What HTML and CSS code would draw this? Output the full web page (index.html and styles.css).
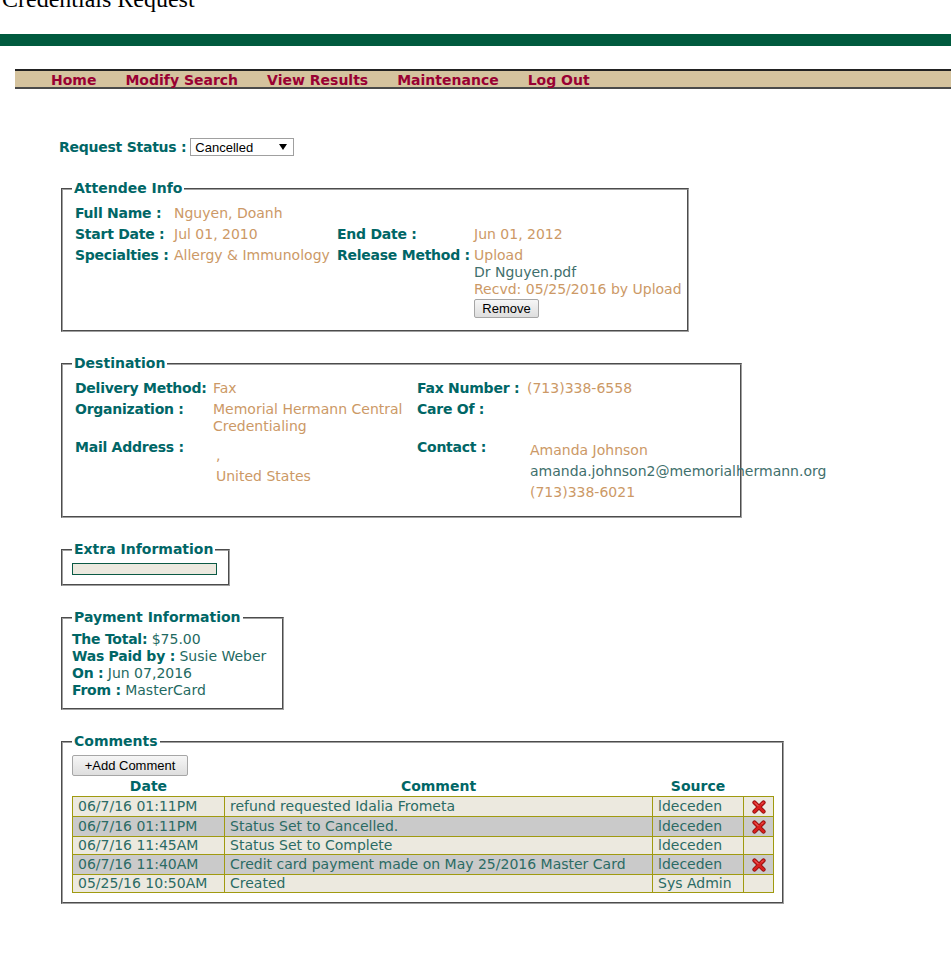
FILE: index.html
```html
<!DOCTYPE html>
<html>
<head>
<meta charset="utf-8">
<title>Credentials Request</title>
<link rel="stylesheet" href="styles.css">
</head>
<body>
<div class="title">Credentials Request</div>
<div class="greenbar"></div>
<nav class="nav">
  <a href="#">Home</a>
  <a href="#">Modify Search</a>
  <a href="#">View Results</a>
  <a href="#">Maintenance</a>
  <a href="#">Log Out</a>
</nav>

<main class="content">
  <div class="status-row">
    <span class="label">Request Status :</span>
    <span class="select"><span class="select-value">Cancelled</span><svg class="select-arrow" width="8" height="6" viewBox="0 0 8 6"><polygon points="0,0 8,0 4,6" fill="#000"/></svg></span>
  </div>

  <fieldset class="box box-attendee">
    <legend>Attendee Info</legend>
    <table class="grid grid-attendee">
      <colgroup><col class="c-a1"><col class="c-a2"><col class="c-a3"><col class="c-a4"></colgroup>
      <tr>
        <td class="label">Full Name :</td>
        <td class="val">Nguyen, Doanh</td>
        <td></td><td></td>
      </tr>
      <tr>
        <td class="label">Start Date :</td>
        <td class="val">Jul 01, 2010</td>
        <td class="label">End Date :</td>
        <td class="val">Jun 01, 2012</td>
      </tr>
      <tr>
        <td class="label">Specialties :</td>
        <td class="val">Allergy &amp; Immunology</td>
        <td class="label">Release Method :</td>
        <td class="val">Upload<br><span class="file">Dr Nguyen.pdf</span><br>Recvd: 05/25/2016 by Upload<button class="btn btn-remove">Remove</button></td>
      </tr>
    </table>
  </fieldset>

  <fieldset class="box box-dest">
    <legend>Destination</legend>
    <table class="grid grid-dest">
      <colgroup><col class="c-d1"><col class="c-d2"><col class="c-d3"><col class="c-d4"></colgroup>
      <tr>
        <td class="label">Delivery Method:</td>
        <td class="val">Fax</td>
        <td class="label">Fax Number :</td>
        <td class="val">(713)338-6558</td>
      </tr>
      <tr>
        <td class="label">Organization :</td>
        <td class="val">Memorial Hermann Central Credentialing</td>
        <td class="label">Care Of :</td>
        <td class="val"></td>
      </tr>
      <tr>
        <td class="label">Mail Address :</td>
        <td class="nest-cell">
          <table class="nest">
            <tr><td class="val comma-row">,</td></tr>
            <tr><td class="val">United States</td></tr>
          </table>
        </td>
        <td class="label">Contact :</td>
        <td class="nest-cell">
          <table class="nest">
            <tr><td class="val">Amanda Johnson</td></tr>
            <tr><td class="file">amanda.johnson2@memorialhermann.org</td></tr>
            <tr><td class="val">(713)338-6021</td></tr>
          </table>
        </td>
      </tr>
    </table>
  </fieldset>

  <fieldset class="box box-extra">
    <legend>Extra Information</legend>
    <div class="extra-field"></div>
  </fieldset>

  <fieldset class="box box-pay">
    <legend>Payment Information</legend>
    <div class="pay-line"><span class="label">The Total:</span> $75.00</div>
    <div class="pay-line"><span class="label">Was Paid by :</span> Susie Weber</div>
    <div class="pay-line"><span class="label">On :</span> Jun 07,2016</div>
    <div class="pay-line"><span class="label">From :</span> MasterCard</div>
  </fieldset>

  <fieldset class="box box-comments">
    <legend>Comments</legend>
    <button class="btn btn-add">+Add Comment</button>
    <table class="comments">
      <colgroup><col class="c-date"><col class="c-comment"><col class="c-source"><col class="c-del"></colgroup>
      <thead>
        <tr><th>Date</th><th>Comment</th><th>Source</th><th></th></tr>
      </thead>
      <tbody>
        <tr class="odd">
          <td>06/7/16 01:11PM</td><td>refund requested Idalia Frometa</td><td>ldeceden</td>
          <td class="del"><svg class="xicon" width="14" height="14" viewBox="0 0 14 14"><path d="M2.5 2.5 L11.5 11.5 M11.5 2.5 L2.5 11.5" stroke="#8a0c0c" stroke-width="4.2" stroke-linecap="round"/><path d="M2.5 2.5 L11.5 11.5 M11.5 2.5 L2.5 11.5" stroke="#d8201f" stroke-width="2.6" stroke-linecap="round"/><path d="M3.2 2.8 L6 5.6 M10.8 2.8 L9.6 4" stroke="#f07a78" stroke-width="0.9" stroke-linecap="round"/></svg></td>
        </tr>
        <tr class="even">
          <td>06/7/16 01:11PM</td><td>Status Set to Cancelled.</td><td>ldeceden</td>
          <td class="del"><svg class="xicon" width="14" height="14" viewBox="0 0 14 14"><path d="M2.5 2.5 L11.5 11.5 M11.5 2.5 L2.5 11.5" stroke="#8a0c0c" stroke-width="4.2" stroke-linecap="round"/><path d="M2.5 2.5 L11.5 11.5 M11.5 2.5 L2.5 11.5" stroke="#d8201f" stroke-width="2.6" stroke-linecap="round"/><path d="M3.2 2.8 L6 5.6 M10.8 2.8 L9.6 4" stroke="#f07a78" stroke-width="0.9" stroke-linecap="round"/></svg></td>
        </tr>
        <tr class="odd">
          <td>06/7/16 11:45AM</td><td>Status Set to Complete</td><td>ldeceden</td><td class="del"></td>
        </tr>
        <tr class="even">
          <td>06/7/16 11:40AM</td><td>Credit card payment made on May 25/2016 Master Card</td><td>ldeceden</td>
          <td class="del"><svg class="xicon" width="14" height="14" viewBox="0 0 14 14"><path d="M2.5 2.5 L11.5 11.5 M11.5 2.5 L2.5 11.5" stroke="#8a0c0c" stroke-width="4.2" stroke-linecap="round"/><path d="M2.5 2.5 L11.5 11.5 M11.5 2.5 L2.5 11.5" stroke="#d8201f" stroke-width="2.6" stroke-linecap="round"/><path d="M3.2 2.8 L6 5.6 M10.8 2.8 L9.6 4" stroke="#f07a78" stroke-width="0.9" stroke-linecap="round"/></svg></td>
        </tr>
        <tr class="odd">
          <td>05/25/16 10:50AM</td><td>Created</td><td>Sys Admin</td><td class="del"></td>
        </tr>
      </tbody>
    </table>
  </fieldset>
</main>
</body>
</html>
```
FILE: styles.css
```css
html, body {
  margin: 0;
  padding: 0;
  background: #fff;
}
body {
  font-family: "DejaVu Sans", Verdana, sans-serif;
  font-size: 14px;
  line-height: 17px;
  color: #2b6b64;
}
.title {
  font-family: "Liberation Serif", "Times New Roman", serif;
  font-size: 24px;
  line-height: 24px;
  color: #000;
  margin: -13px 0 0 2px;
}
.greenbar {
  height: 12px;
  background: #005a3e;
  margin-top: 23px;
}
.nav {
  margin: 23px 0 0 15px;
  background: #d5c39e;
  border-top: 2px solid #222;
  border-bottom: 2px solid #4a4a4a;
  padding: 2px 0 0 36px;
  height: 14px;
  line-height: 15px;
  display: flex;
  gap: 29px;
}
.nav a {
  color: #990033;
  font-weight: bold;
  text-decoration: none;
  font-size: 14px;
}
.content {
  padding-left: 59px;
}
.label {
  color: #006666;
  font-weight: bold;
  white-space: nowrap;
  letter-spacing: -0.25px;
}
.val {
  color: #cc9966;
}
.file {
  color: #3f6f6c;
}
.status-row {
  margin-top: 49px;
  display: flex;
  align-items: center;
  gap: 4px;
  height: 18px;
}
.select {
  box-sizing: border-box;
  width: 104px;
  height: 18px;
  border: 1px solid #a0a0a0;
  background: #fff;
  display: flex;
  align-items: center;
  justify-content: space-between;
  padding: 0 6px 0 4px;
  font-family: "Liberation Sans", Arial, sans-serif;
  font-size: 13px;
  color: #000;
}
.select-arrow {
  display: block;
}
.box {
  box-sizing: border-box;
  margin: 24px 0 0 2px;
  border: 2px groove #a0a0a0;
  padding: 5px 9px 9px 9px;
  min-width: 0;
}
.box + .box {
  margin-top: 23px;
}
.box legend {
  color: #006666;
  font-weight: bold;
  padding: 0 2px;
  line-height: 17px;
}
.box-attendee { width: 628px; padding-right: 0; }
.box-dest { width: 681px; }
.box-extra { width: 169px; }
.box-pay { width: 223px; }
.box-comments { width: 723px; }

.grid {
  border-collapse: separate;
  border-spacing: 2px;
  table-layout: fixed;
}
.grid td {
  padding: 1px;
  vertical-align: top;
  white-space: nowrap;
}
.grid-attendee { width: 615px; }
.c-a1 { width: 97px; }
.c-a2 { width: 161px; }
.c-a3 { width: 135px; }
.c-a4 { width: 212px; }

.grid-dest { width: 659px; }
.c-d1 { width: 136px; }
.c-d2 { width: 202px; }
.c-d3 { width: 108px; }
.c-d4 { width: 203px; }
.grid-dest td.val { white-space: normal; }
.grid td.nest-cell { padding: 1px; }
.nest {
  border-collapse: separate;
  border-spacing: 2px;
}
.nest td {
  padding: 1px;
  white-space: nowrap;
}
.grid .nest td.val { white-space: nowrap; }
.nest td.comma-row { padding-top: 6px; }

.btn {
  font-family: "Liberation Sans", Arial, sans-serif;
  font-size: 13px;
  color: #000;
  background: linear-gradient(#f6f6f6, #dedede);
  border: 1px solid #a6a6a6;
  border-radius: 2px;
  padding: 0;
  box-sizing: border-box;
}
.btn-remove {
  display: block;
  margin-top: 1px;
  width: 65px;
  height: 19px;
}
.btn-add {
  display: block;
  width: 116px;
  height: 21px;
}

.extra-field {
  box-sizing: border-box;
  width: 145px;
  height: 12px;
  background: #ece9df;
  border: 1px solid #0b5a45;
}

.pay-line {
  line-height: 17px;
  color: #1f6a62;
  white-space: nowrap;
}

.comments {
  border-collapse: collapse;
  table-layout: fixed;
  width: 701px;
}
.c-date { width: 152px; }
.c-comment { width: 428px; }
.c-source { width: 91px; }
.c-del { width: 30px; }
.comments th {
  color: #006666;
  font-weight: bold;
  text-align: center;
  padding: 2px 0 1px;
  line-height: 17px;
}
.comments td {
  border: 1px solid #a09a10;
  padding: 0 5px;
  line-height: 17px;
  white-space: nowrap;
  color: #2b6b64;
}
.comments tr.odd td { background: #ece9df; }
.comments tr.even td { background: #cacaca; }
.comments td.del {
  padding: 0;
}
.xicon {
  display: block;
  margin: 3px auto 2px;
}
```
